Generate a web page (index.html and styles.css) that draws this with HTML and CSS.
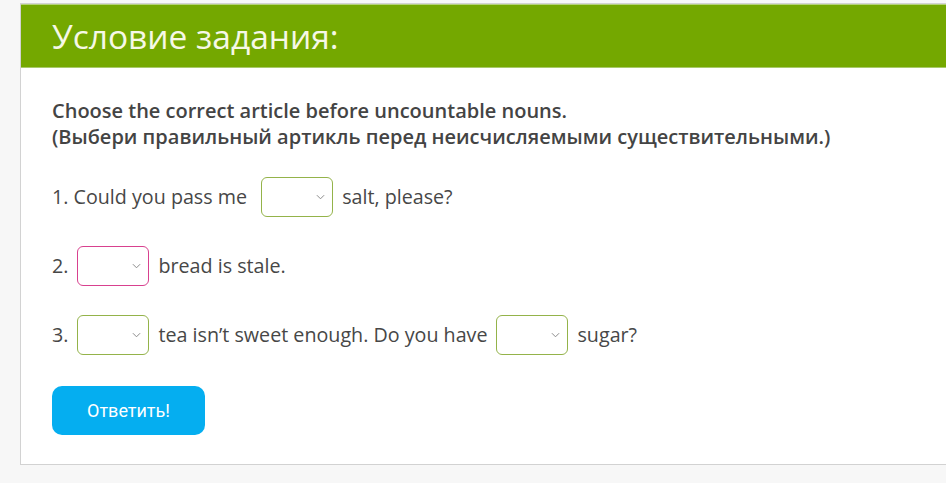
FILE: index.html
```html
<!DOCTYPE html>
<html lang="ru">
<head>
  <meta charset="UTF-8">
  <title>Условие задания</title>
  <link rel="stylesheet" href="styles.css">
</head>
<body>

  <div class="task">
    <div class="task-head">Условие задания:</div>

    <div class="task-body">
      <p class="task-text">
        Choose the correct article before uncountable nouns.<br>
        (Выбери правильный артикль перед неисчисляемыми существительными.)
      </p>

      <div class="row">1. Could you pass me <span class="pick"><select><option></option><option>a</option><option>an</option><option>the</option><option>—</option></select><svg viewBox="0 0 10 6"><path d="M1 1l4 4 4-4"/></svg></span>salt, please?</div>

      <div class="row">2.<span class="pick wrong"><select><option></option><option>a</option><option>an</option><option>the</option><option>—</option></select><svg viewBox="0 0 10 6"><path d="M1 1l4 4 4-4"/></svg></span>bread is stale.</div>

      <div class="row">3.<span class="pick"><select><option></option><option>a</option><option>an</option><option>the</option><option>—</option></select><svg viewBox="0 0 10 6"><path d="M1 1l4 4 4-4"/></svg></span>tea isn’t sweet enough. Do you have<span class="pick"><select><option></option><option>a</option><option>an</option><option>the</option><option>—</option></select><svg viewBox="0 0 10 6"><path d="M1 1l4 4 4-4"/></svg></span>sugar?</div>

      <button class="answer">Ответить!</button>
    </div>
  </div>

</body>
</html>
```

FILE: styles.css
```css
body {
  margin: 0;
  background: #f7f7f7;
  font-family: 'Open Sans', sans-serif;
  color: #474747;
}

.task {
  margin: 3px -12px 0 20px;
  background: #fff;
  border: 1px solid #d2d2d2;
}

.task-head {
  height: 62px;
  padding-left: 31px;
  background: #74a800;
  border-top: 1px solid #b5d27a;
  border-bottom: 1px solid #a8c96a;
  color: #f6f8e6;
  font-size: 33.5px;
  line-height: 62px;
}

.task-body {
  padding: 30px 31px 29px;
}

.task-text {
  margin: 0 0 27px;
  font-size: 20px;
  font-weight: 600;
  line-height: 26px;
  color: #444;
}

.row {
  height: 40px;
  margin-bottom: 29px;
  font-size: 19.7px;
  line-height: 40px;
}

.pick {
  position: relative;
  display: inline-block;
  vertical-align: top;
  margin: 0 9px;
}

.pick select {
  display: block;
  width: 72px;
  height: 40px;
  padding: 0 8px;
  border: 1.5px solid #94b34a;
  border-radius: 6px;
  background: #fff;
  font: inherit;
  -webkit-appearance: none;
  appearance: none;
}

.pick.wrong select {
  border-color: #d8418f;
}

.pick svg {
  position: absolute;
  right: 8px;
  top: 17px;
  width: 9px;
  height: 6px;
  fill: none;
  stroke: #8a8a8a;
  stroke-width: 1.1;
  pointer-events: none;
}

.answer {
  display: block;
  width: 153px;
  height: 49px;
  margin-top: 31px;
  border: none;
  border-radius: 10px;
  background: #05aef0;
  color: #fff;
  font-family: 'Roboto', sans-serif;
  font-size: 18px;
  cursor: pointer;
}
```
